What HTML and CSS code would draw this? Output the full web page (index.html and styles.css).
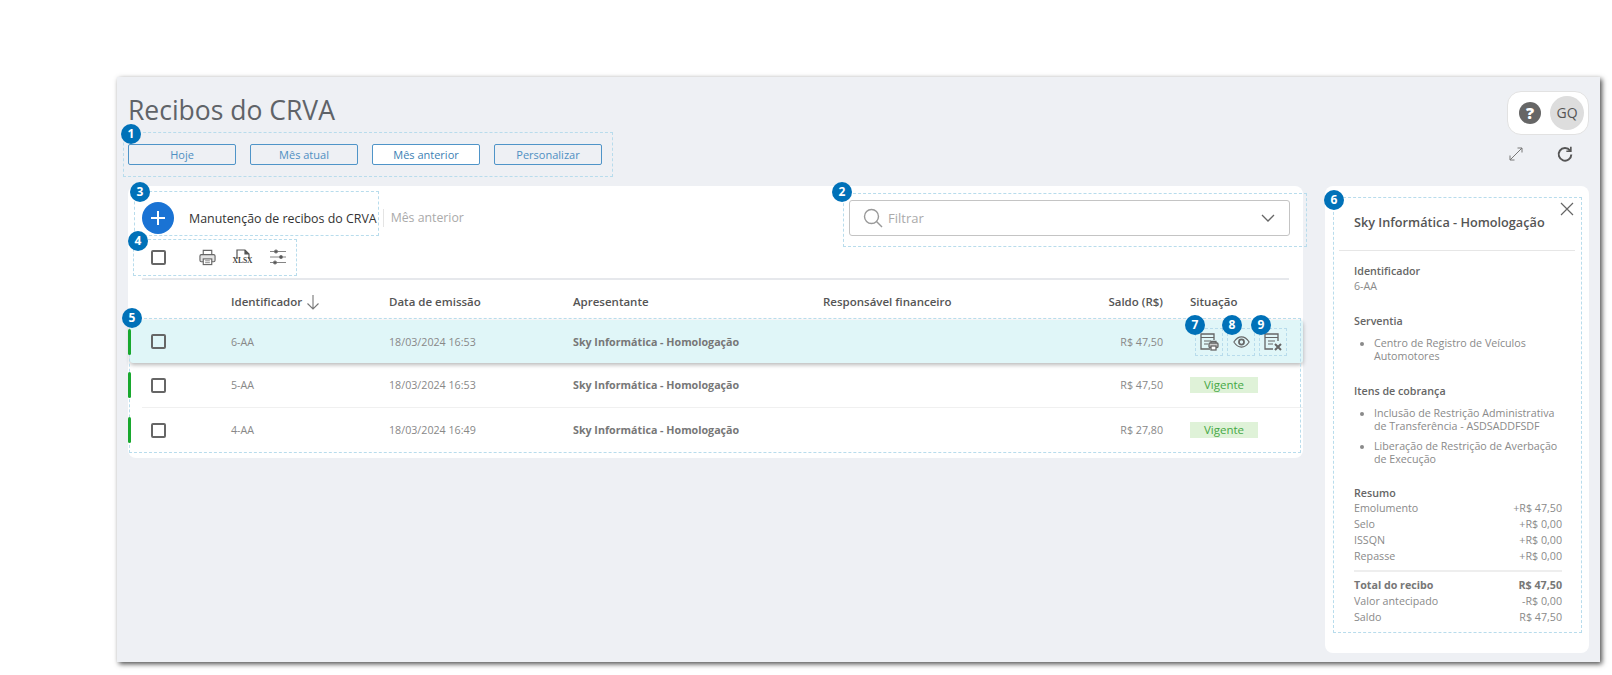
FILE: index.html
```html
<!DOCTYPE html>
<html lang="pt-BR">
<head>
    <meta charset="UTF-8">
    <title>Recibos do CRVA</title>
    <link rel="stylesheet" href="styles.css">
</head>
<body>

<div class="window">
    <header class="topbar">
        <div>
            <h1>Recibos do CRVA</h1>
            <div class="periods">
                <button class="period">Hoje</button>
                <button class="period">Mês atual</button>
                <button class="period active">Mês anterior</button>
                <button class="period">Personalizar</button>
            </div>
        </div>
        <div class="top-right">
            <div class="help-box">
                <span class="help">?</span>
                <span class="avatar">GQ</span>
            </div>
            <div class="top-tools">
                <svg width="18" height="18" viewBox="0 0 18 18" fill="none" stroke="#777" stroke-width="1"><path d="M3 15 15 3M10.500 3H15V7.500M3 10.500V15H7.500"/></svg>
                <svg width="18" height="18" viewBox="0 0 20 20" fill="none" stroke="#555" stroke-width="2.200"><path d="M15.600 6.200A7 7 0 1 0 17 10.500"/><path d="M16.500 2V7H11.500" stroke-width="1.800"/></svg>
            </div>
        </div>
    </header>

    <div class="content">
        <main class="card">
            <div class="card-head">
                <button class="fab">
                    <svg width="14" height="14" viewBox="0 0 14 14" stroke="#fff" stroke-width="2"><path d="M7 0V14M0 7H14"/></svg>
                </button>
                <span class="card-title">Manutenção de recibos do CRVA</span>
                <span class="card-period">Mês anterior</span>
                <div class="filter">
                    <svg width="20" height="20" viewBox="0 0 20 20" fill="none" stroke="#999" stroke-width="1.400"><circle cx="8.500" cy="8.500" r="7"/><path d="M13.500 13.500 19 19"/></svg>
                    <span class="filter-text">Filtrar</span>
                    <svg width="14" height="8" viewBox="0 0 14 8" fill="none" stroke="#666" stroke-width="1.300"><path d="M1 1 7 7 13 1"/></svg>
                </div>
            </div>

            <div class="toolbar">
                <span class="check"></span>
                <div class="tools">
                    <svg width="17" height="17" viewBox="0 0 18 18" fill="none" stroke="#666" stroke-width="1.200"><path d="M4.500 6V1.500H13.500V6"/><rect x="1" y="6" width="16" height="7.500" rx="1.500" fill="#e4e4e4"/><rect x="4.500" y="10.500" width="9" height="6" fill="#fff"/><path d="M6.500 12.500H11.500M6.500 14.500H11.500" stroke-width=".8"/></svg>
                    <span class="xlsx">
                        <svg width="14" height="11" viewBox="0 0 14 11" fill="none" stroke="#555" stroke-width="1.200"><path d="M1 10V1H9L13 5V10"/><path d="M9 1V5H13" fill="#555"/></svg>
                        <b>XLSX</b>
                    </span>
                    <svg width="18" height="16" viewBox="0 0 18 16" stroke="#777" stroke-width=".9"><path d="M1 2.500H17M1 8H17M1 13.500H17"/><circle cx="7" cy="2.500" r="1.600" fill="#555"/><circle cx="12" cy="8" r="1.600" fill="#555"/><circle cx="6" cy="13.500" r="1.600" fill="#555"/></svg>
                </div>
            </div>

            <div class="table-head">
                <span></span>
                <span class="sort">Identificador
                    <svg width="14" height="16" viewBox="0 0 14 16" fill="none" stroke="#777" stroke-width="1.100"><path d="M7 1V15M1.500 9.500 7 15 12.500 9.500"/></svg>
                </span>
                <span>Data de emissão</span>
                <span>Apresentante</span>
                <span>Responsável financeiro</span>
                <span class="money">Saldo (R$)</span>
                <span class="status">Situação</span>
            </div>

            <div class="row selected">
                <span class="check"></span>
                <span>6-AA</span>
                <span>18/03/2024 16:53</span>
                <b>Sky Informática - Homologação</b>
                <span></span>
                <span class="money">R$ 47,50</span>
                <div class="actions">
                    <span class="action">
                        <svg width="20" height="20" viewBox="0 0 20 20" fill="none" stroke="#666" stroke-width="1.300"><path d="M11 17H2V2H15V8"/><path d="M2 5.500H15M5 9H12M5 12H9" stroke-width="1.100"/><path d="M12 11V9.500H17V11"/><rect x="10" y="11" width="9" height="4.500" rx="1" fill="#ccc"/><rect x="12" y="14" width="5" height="4" fill="#fff"/></svg>
                    </span>
                    <span class="action">
                        <svg width="17" height="12" viewBox="0 0 20 14" fill="none" stroke="#666" stroke-width="1.300"><path d="M1 7C4 2.500 7 1 10 1S16 2.500 19 7C16 11.500 13 13 10 13S4 11.500 1 7Z"/><circle cx="10" cy="7" r="3" stroke-width="2"/></svg>
                    </span>
                    <span class="action">
                        <svg width="20" height="20" viewBox="0 0 20 20" fill="none" stroke="#666" stroke-width="1.300"><path d="M10 17H2V2H15V9"/><path d="M2 5.500H15M5 9H12M5 12H10" stroke-width="1.100"/><path d="M12 12 18 18M18 12 12 18" stroke-width="2"/></svg>
                    </span>
                </div>
            </div>
            <div class="row">
                <span class="check"></span>
                <span>5-AA</span>
                <span>18/03/2024 16:53</span>
                <b>Sky Informática - Homologação</b>
                <span></span>
                <span class="money">R$ 47,50</span>
                <div class="status"><span class="tag">Vigente</span></div>
            </div>
            <hr class="row-sep">
            <div class="row">
                <span class="check"></span>
                <span>4-AA</span>
                <span>18/03/2024 16:49</span>
                <b>Sky Informática - Homologação</b>
                <span></span>
                <span class="money">R$ 27,80</span>
                <div class="status"><span class="tag">Vigente</span></div>
            </div>
        </main>

        <aside class="detail">
            <svg class="detail-close" width="14" height="14" viewBox="0 0 14 14" stroke="#666" stroke-width="1.200"><path d="M1 1 13 13M13 1 1 13"/></svg>
            <h2>Sky Informática - Homologação</h2>
            <hr class="detail-sep">
            <div class="detail-body">
                <h3>Identificador</h3>
                <p>6-AA</p>
                <h3 class="gap">Serventia</h3>
                <ul>
                    <li>Centro de Registro de Veículos Automotores</li>
                </ul>
                <h3 class="gap">Itens de cobrança</h3>
                <ul>
                    <li>Inclusão de Restrição Administrativa de Transferência - ASDSADDFSDF</li>
                    <li>Liberação de Restrição de Averbação de Execução</li>
                </ul>
                <h3 class="gap-big">Resumo</h3>
                <div class="sum"><span>Emolumento</span><span>+R$ 47,50</span></div>
                <div class="sum"><span>Selo</span><span>+R$ 0,00</span></div>
                <div class="sum"><span>ISSQN</span><span>+R$ 0,00</span></div>
                <div class="sum"><span>Repasse</span><span>+R$ 0,00</span></div>
                <hr class="sum-sep">
                <div class="sum total"><span>Total do recibo</span><span>R$ 47,50</span></div>
                <div class="sum"><span>Valor antecipado</span><span>-R$ 0,00</span></div>
                <div class="sum"><span>Saldo</span><span>R$ 47,50</span></div>
            </div>
        </aside>
    </div>

    <!-- marcacoes do manual -->
    <div class="mark mark-1"></div>
    <div class="mark mark-2"></div>
    <div class="mark mark-3"></div>
    <div class="mark mark-4"></div>
    <div class="mark mark-5"></div>
    <div class="mark mark-6"></div>
    <span class="badge badge-1">1</span>
    <span class="badge badge-2">2</span>
    <span class="badge badge-3">3</span>
    <span class="badge badge-4">4</span>
    <span class="badge badge-5">5</span>
    <span class="badge badge-6">6</span>
    <span class="badge badge-7">7</span>
    <span class="badge badge-8">8</span>
    <span class="badge badge-9">9</span>
</div>

</body>
</html>
```

FILE: styles.css
```css
html {
    height: 100%;
}

body {
    box-sizing: border-box;
    height: 100%;
    margin: 0;
    padding: 77px 0 0 117px;
    background-color: #fff;
    font-family: "Open Sans", sans-serif;
    color: #777;
}

.window {
    position: relative;
    box-sizing: border-box;
    width: 1483px;
    height: 585px;
    padding: 0 11px;
    background-color: #eef0f4;
    box-shadow: 2px 2px 5px rgba(0, 0, 0, 0.7);
}

.topbar {
    display: flex;
    justify-content: space-between;
    height: 109px;
}

h1 {
    margin: 16px 0 0;
    font-size: 26.5px;
    line-height: 34px;
    font-weight: 400;
    color: #5f6368;
}

.periods {
    display: flex;
    gap: 14px;
    margin-top: 17px;
}

.period {
    width: 108px;
    height: 21px;
    padding: 0;
    border: 1px solid #4f94c8;
    border-radius: 2px;
    background-color: transparent;
    font-family: inherit;
    font-size: 11px;
    color: #4f8fc2;
}

.period.active {
    background-color: #fff;
    color: #3c7fb4;
}

.top-right {
    display: flex;
    flex-direction: column;
    align-items: flex-end;
}

.help-box {
    display: flex;
    align-items: center;
    gap: 9px;
    box-sizing: border-box;
    width: 82px;
    height: 44px;
    margin-top: 14px;
    padding-left: 11px;
    background-color: #fff;
    border: 1px solid #e2e2e2;
    border-radius: 14px;
}

.help {
    width: 22px;
    height: 22px;
    border-radius: 50%;
    background-color: #666;
    color: #fff;
    font-size: 16px;
    line-height: 22px;
    font-weight: 800;
    text-align: center;
}

.avatar {
    width: 34px;
    height: 34px;
    border-radius: 50%;
    background-color: #ddd;
    color: #555;
    font-size: 14px;
    line-height: 34px;
    text-align: center;
}

.top-tools {
    display: flex;
    align-items: center;
    gap: 31px;
    margin: 10px 15px 0 0;
}

.content {
    display: flex;
    align-items: flex-start;
    gap: 22px;
}

.card {
    width: 1175px;
    height: 272px;
    background-color: #fff;
    border-radius: 8px;
}

.card-head {
    display: flex;
    align-items: center;
    height: 36px;
    padding: 14px 11px 0 14px;
}

.fab {
    display: flex;
    align-items: center;
    justify-content: center;
    width: 32px;
    height: 32px;
    padding: 0;
    border: none;
    border-radius: 50%;
    background-color: #1a73d4;
}

.card-title {
    margin-left: 15px;
    font-size: 12.4px;
    color: #333;
}

.card-period {
    margin-left: 6px;
    padding-left: 7px;
    border-left: 1px solid #e4e4e4;
    font-size: 12.3px;
    line-height: 18px;
    color: #aaa;
}

.filter {
    display: flex;
    align-items: center;
    box-sizing: border-box;
    width: 441px;
    height: 36px;
    margin: 0 2px 0 auto;
    padding: 0 14px 0 13px;
    background-color: #fff;
    border: 1px solid #c4c4c4;
    border-radius: 3px;
}

.filter-text {
    flex: 1;
    margin-left: 5px;
    font-size: 13px;
    color: #aaa;
}

.toolbar {
    display: flex;
    align-items: center;
    box-sizing: border-box;
    height: 44px;
    margin: 0 14px;
    padding-left: 9px;
    border-bottom: 2px solid #e6e8ec;
}

.toolbar .check {
    margin-top: 1px;
}

.check {
    display: block;
    box-sizing: border-box;
    width: 15px;
    height: 15px;
    border: 2px solid #666;
    border-radius: 2px;
}

.tools {
    display: flex;
    align-items: center;
    gap: 18px;
    margin-left: 33px;
}

.xlsx {
    display: flex;
    flex-direction: column;
    align-items: center;
    width: 17px;
}

.xlsx b {
    margin-top: -3px;
    font-family: "Liberation Serif", serif;
    font-size: 7.5px;
    line-height: 8px;
    color: #444;
}

.table-head,
.row {
    display: grid;
    grid-template-columns: 80px 158px 184px 250px 200px 140px 1fr;
    align-items: center;
}

.table-head {
    box-sizing: border-box;
    height: 40px;
    padding: 3px 0 0 23px;
    font-size: 11.5px;
    font-weight: 600;
    color: #555;
}

.sort {
    display: flex;
    align-items: center;
    gap: 4px;
}

.money {
    text-align: right;
}

.status {
    padding-left: 27px;
}

.row {
    position: relative;
    height: 44px;
    margin-left: 2px;
    padding-left: 21px;
    font-size: 10.7px;
    color: #888;
}

.row b {
    font-weight: 700;
    color: #777;
}

.row::before {
    content: "";
    position: absolute;
    z-index: 1;
    left: -2px;
    top: 9px;
    width: 3px;
    height: 26px;
    border-radius: 2px;
    background-color: #18a82e;
}

.row.selected {
    height: 43px;
    background-color: #e0f6f8;
    border-radius: 3px;
    box-shadow: 0 2px 4px rgba(0, 0, 0, 0.28);
}

.row-sep {
    height: 1px;
    margin: 0 0 0 14px;
    border: none;
    background-color: #f0f0f0;
}

.actions {
    display: flex;
    gap: 4px;
    padding-left: 32px;
}

.action {
    display: flex;
    align-items: center;
    justify-content: center;
    box-sizing: border-box;
    width: 28px;
    height: 28px;
    border: 1px dashed #b8dcec;
}

.tag {
    display: block;
    width: 68px;
    background-color: #dff2d8;
    font-size: 11.5px;
    line-height: 16px;
    text-align: center;
    color: #46a846;
}

.detail {
    position: relative;
    box-sizing: border-box;
    width: 264px;
    height: 467px;
    padding: 0 14px;
    background-color: #fff;
    border-radius: 8px;
}

.detail-close {
    position: absolute;
    top: 16px;
    right: 15px;
}

.detail h2 {
    margin: 0;
    padding: 26px 0 0 15px;
    font-size: 12.7px;
    line-height: 20px;
    font-weight: 600;
    color: #555;
}

.detail-sep {
    height: 1px;
    margin: 18px 0 0;
    border: none;
    background-color: #e6e6e6;
}

.detail-body {
    padding: 13px 13px 0 15px;
    font-size: 10.7px;
    line-height: 13px;
    color: #8a8a8a;
}

h3 {
    margin: 0;
    font-size: 10.7px;
    line-height: 14px;
    font-weight: 600;
    color: #666;
}

h3.gap {
    margin-top: 20.5px;
}

h3.gap-big {
    margin-top: 20px;
}

p {
    margin: 2px 0 0;
}

ul {
    margin: 9.5px 0 0;
    padding: 0 0 0 20px;
}

li + li {
    margin-top: 7px;
}

.sum {
    display: flex;
    justify-content: space-between;
    height: 16px;
    line-height: 16px;
}

.sum.total {
    font-weight: 700;
    color: #777;
}

.sum-sep {
    height: 2px;
    margin: 6px 0 5px;
    border: none;
    background-color: #eee;
}

.mark {
    position: absolute;
    box-sizing: border-box;
    border: 1px dashed #b8dcec;
    pointer-events: none;
}

.mark-1 { left: 6px; top: 55px; width: 490px; height: 45px; }
.mark-2 { left: 726px; top: 116px; width: 464px; height: 54px; }
.mark-3 { left: 17px; top: 114px; width: 245px; height: 45px; }
.mark-4 { left: 16px; top: 162px; width: 164px; height: 37px; }
.mark-5 { left: 12px; top: 241px; width: 1172px; height: 135px; }
.mark-6 { left: 1216px; top: 120px; width: 249px; height: 436px; }

.badge {
    position: absolute;
    z-index: 2;
    width: 20px;
    height: 20px;
    border-radius: 50%;
    background-color: #0071b8;
    color: #fff;
    font-size: 12px;
    line-height: 20px;
    font-weight: 700;
    text-align: center;
}

.badge-1 { left: 4px; top: 47px; }
.badge-2 { left: 715px; top: 105px; }
.badge-3 { left: 13px; top: 105px; }
.badge-4 { left: 11px; top: 154px; }
.badge-5 { left: 5px; top: 231px; }
.badge-6 { left: 1207px; top: 113px; }
.badge-7 { left: 1068px; top: 238px; }
.badge-8 { left: 1105px; top: 238px; }
.badge-9 { left: 1134px; top: 238px; }
```
